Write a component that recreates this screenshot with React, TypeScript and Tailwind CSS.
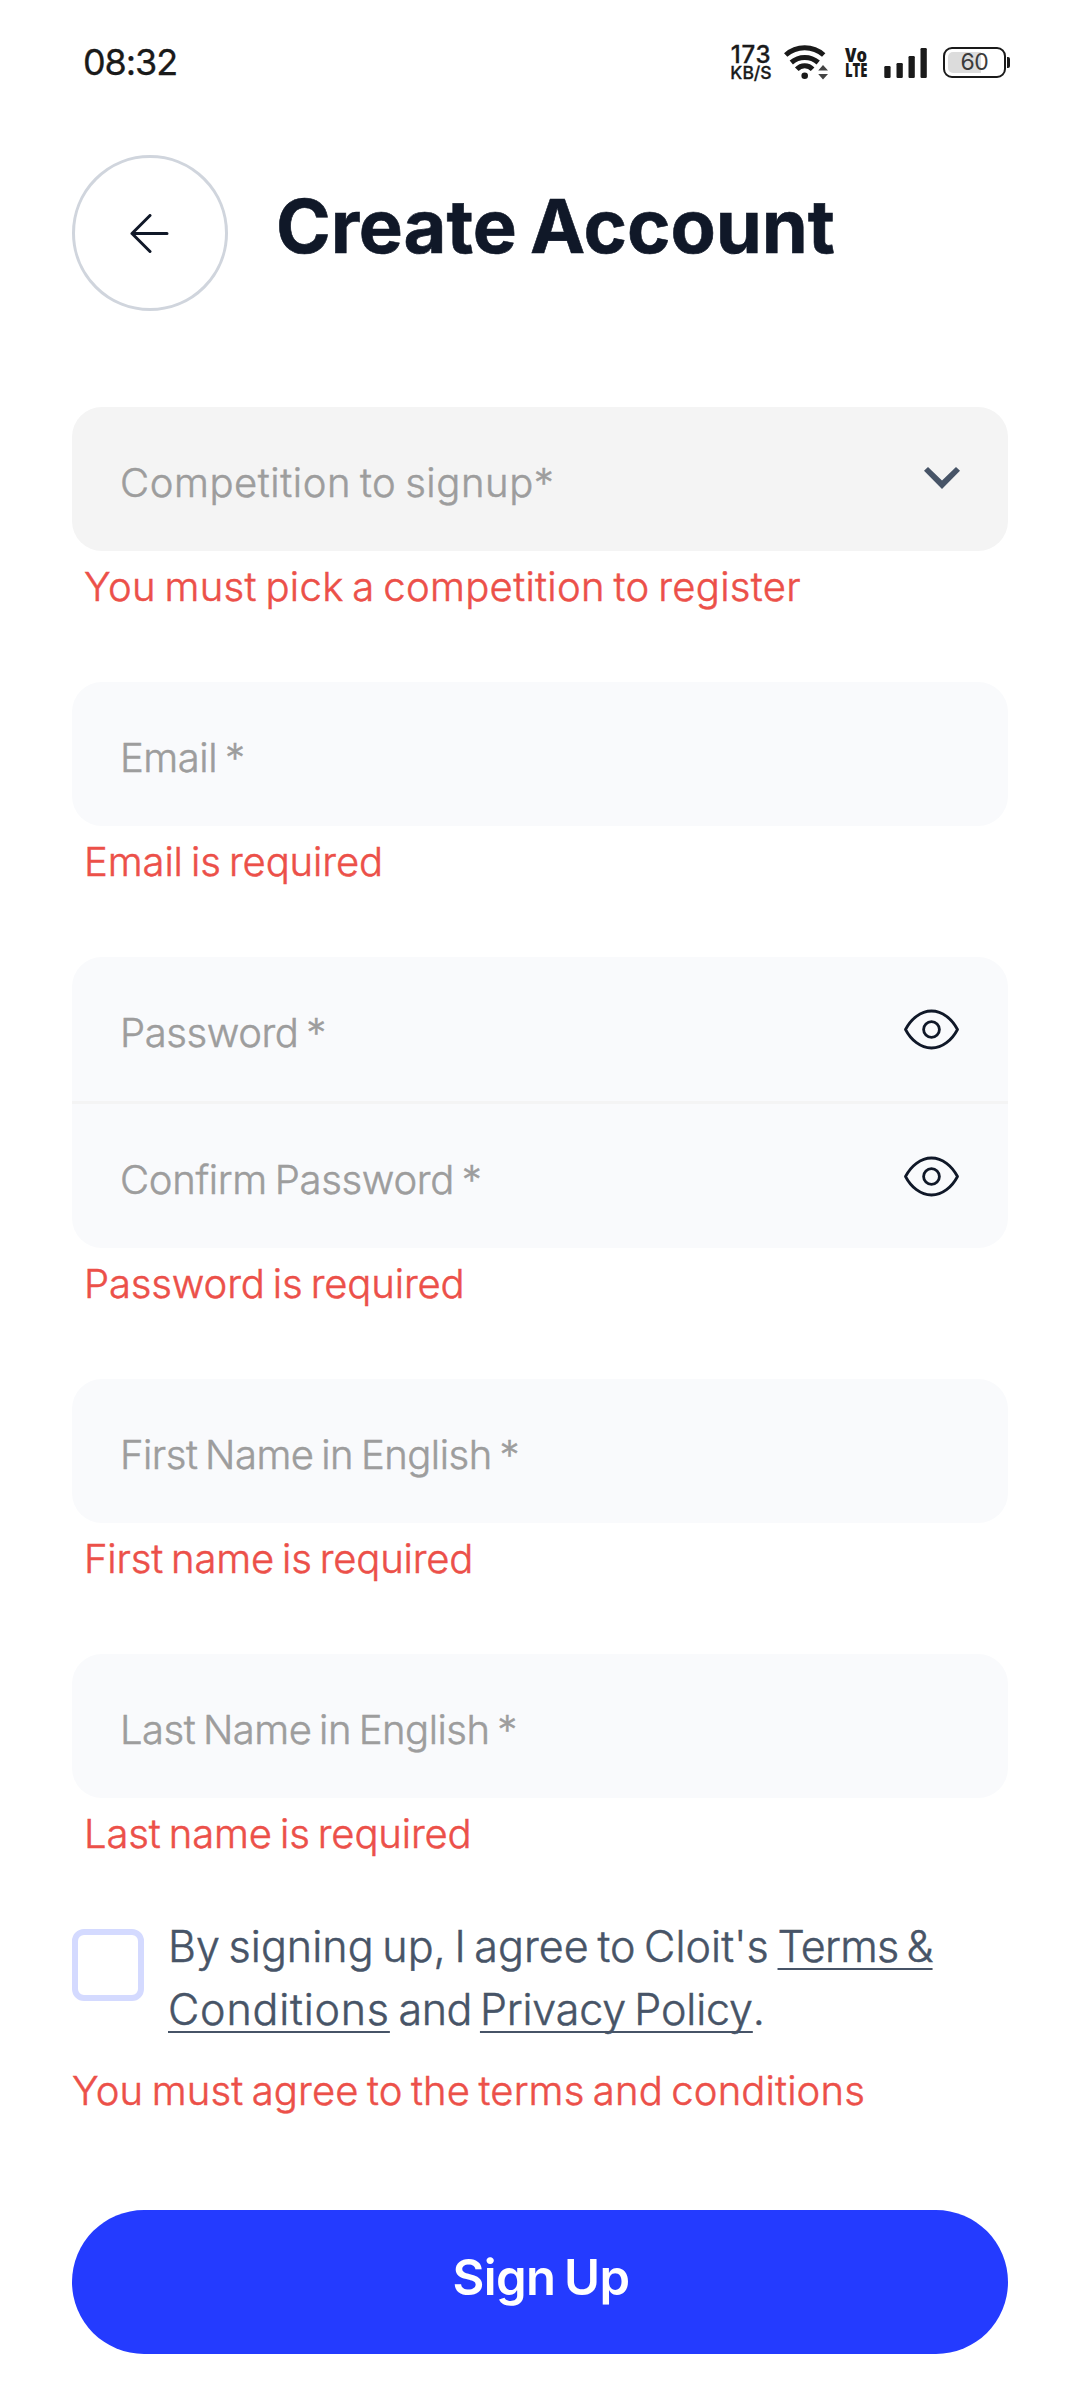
import React from 'react';

function StatusBar() {
  return (
    <div className="flex h-[125px] items-center justify-between pr-[70px] pl-[83px] text-[#1a1a1a]">
      <span className="pb-[2px] text-[36px] leading-none tracking-[-1.1px] [-webkit-text-stroke:0.3px]">08:32</span>
      <div className="flex items-center">
        <div className="flex w-[42px] flex-col items-center pt-px font-medium">
          <span className="text-[24px] leading-[19px] tracking-[0.8px] [-webkit-text-stroke:0.3px]">173</span>
          <span className="text-[17.5px] leading-[17px] tracking-[0px] [-webkit-text-stroke:0.3px]">KB/S</span>
        </div>
        <svg className="ml-[12px] h-[36px] w-[45px]" viewBox="784 43.5 45 36" fill="none">
          <g stroke="#1a1a1a" strokeWidth="5">
            <path d="M785.7 53.5A28.5 28.5 0 0 1 823.7 53.5" />
            <path d="M791.3 61A20.5 20.5 0 0 1 818.2 61" />
            <path d="M796.8 67.8A10.8 10.8 0 0 1 812.6 67.8" />
          </g>
          <circle cx="804.7" cy="74.3" r="3.3" fill="#1a1a1a" />
          <path d="M823 63.5L828 69H818.2ZM818.2 72.6H828L823 78Z" fill="#444" />
        </svg>
        <svg
          className="ml-[16px] h-[36px] w-[24px] overflow-visible font-['Open_Sans'] font-extrabold"
          viewBox="845 44.5 24 36"
          fill="#1a1a1a"
        >
          <text x="845" y="61" fontSize="19" textLength="22" lengthAdjust="spacingAndGlyphs">Vo</text>
          <text x="845" y="76.5" fontSize="18.5" textLength="22.5" lengthAdjust="spacingAndGlyphs">LTE</text>
        </svg>
        <svg className="ml-[15px] h-[30px] w-[43px]" viewBox="884 47 43 30" fill="#1a1a1a">
          <rect x="884.3" y="65" width="6.3" height="12" rx="1.2" />
          <rect x="896.5" y="62" width="6.3" height="15" rx="1.2" />
          <rect x="908.5" y="55" width="6.3" height="22" rx="1.2" />
          <rect x="920.5" y="47" width="6.3" height="30" rx="1.2" />
        </svg>
        <div className="ml-[16px] flex items-center">
          <div className="relative flex h-[31px] w-[63px] items-center justify-center rounded-[9px] border-[2.5px] border-[#1a1a1a]">
            <div className="absolute top-[3px] left-[3px] h-[21px] w-[33px] rounded-l-[5px] bg-[#dcdcdc]" />
            <span className="relative text-[23px] leading-none tracking-[-0.5px] text-[#3a3a3a]">60</span>
          </div>
          <div className="ml-[1px] h-[11px] w-[3px] rounded-r-[2px] bg-[#1a1a1a]" />
        </div>
      </div>
    </div>
  );
}

function EyeIcon() {
  return (
    <svg className="h-[42px] w-[56px]" viewBox="0 0 56 42" fill="none" stroke="#101828" strokeWidth="2.8" strokeLinejoin="round">
      <path d="M1.5 21.5C7 11 16.5 3 27.5 3S48 11 53.5 21.5C48 32 38.5 40 27.5 40S7 32 1.5 21.5Z" />
      <circle cx="27.5" cy="21.5" r="7.9" />
    </svg>
  );
}

function ChevronIcon() {
  return (
    <svg className="h-[24px] w-[36px]" viewBox="0 0 36 24" fill="#475467">
      <path d="M0 3.8L4 0L18 13.5L32 0L36 3.8L18 22Z" />
    </svg>
  );
}

interface FieldProps {
  label: string;
  labelClass: string;
  boxClass: string;
  icon?: React.ReactNode;
}

function Field({ label, labelClass, boxClass, icon }: FieldProps) {
  return (
    <div className={`flex h-[144px] items-center justify-between px-12 ${boxClass}`}>
      <span
        className={`pt-[7px] text-[40px] font-light whitespace-nowrap text-[#9d9d9d] [-webkit-text-stroke:0.5px] [word-spacing:-3px] ${labelClass}`}
      >
        {label}
      </span>
      {icon}
    </div>
  );
}

function FieldError({ text, className }: { text: string; className: string }) {
  return (
    <p
      className={`text-[40px] leading-[60px] font-light whitespace-nowrap text-[#ec5049] [-webkit-text-stroke:0.5px] [word-spacing:-3px] ${className}`}
    >
      {text}
    </p>
  );
}

export default function App() {
  return (
    <div className="h-[2400px] w-[1080px] overflow-hidden bg-white font-['Inter',sans-serif]">
      <StatusBar />
      <header className="mt-[30px] flex items-center gap-12 px-[72px]">
        <button className="flex size-[156px] items-center justify-center rounded-full border-3 border-[#d0d5dd]">
          <svg
            className="mr-px size-[39px]"
            viewBox="0 0 39 39"
            fill="none"
            stroke="#101828"
            strokeWidth="3"
            strokeLinecap="round"
            strokeLinejoin="round"
          >
            <path d="M37 19.5H2M20 1.5L2 19.5L20 37.5" />
          </svg>
        </button>
        <h1 className="pb-[14px] text-[74px] leading-none font-bold tracking-[-0.1px] whitespace-nowrap text-[#101828] [-webkit-text-stroke:0.6px] [word-spacing:-4px]">
          Create Account
        </h1>
      </header>

      <form className="mt-24 px-[72px]">
        <Field
          label="Competition to signup*"
          labelClass="tracking-[0.57px]"
          boxClass="rounded-[30px] bg-[#f4f4f4]"
          icon={<ChevronIcon />}
        />
        <FieldError text="You must pick a competition to register" className="mt-[6px] mb-[65px] pl-3 tracking-[0.34px]" />

        <Field label="Email *" labelClass="tracking-[-0.45px]" boxClass="rounded-[30px] bg-[#f9fafc]" />
        <FieldError text="Email is required" className="mt-[6px] mb-[65px] pl-3 tracking-[-0.1px]" />

        <Field
          label="Password *"
          labelClass="tracking-[-0.42px]"
          boxClass="rounded-t-[30px] bg-[#f9fafc]"
          icon={<EyeIcon />}
        />
        <div className="h-[3px] bg-[#f4f4f4]" />
        <Field
          label="Confirm Password *"
          labelClass="tracking-[-0.33px]"
          boxClass="rounded-b-[30px] bg-[#f9fafc]"
          icon={<EyeIcon />}
        />
        <FieldError text="Password is required" className="mt-[6px] mb-[65px] pl-3 tracking-[-0.13px]" />

        <Field label="First Name in English *" labelClass="tracking-[-0.5px]" boxClass="rounded-[30px] bg-[#f9fafc]" />
        <FieldError text="First name is required" className="mt-[6px] mb-[65px] pl-3 tracking-[-0.17px]" />

        <Field label="Last Name in English *" labelClass="tracking-[-0.5px]" boxClass="rounded-[30px] bg-[#f9fafc]" />
        <FieldError text="Last name is required" className="mt-[6px] mb-[51px] pl-3 tracking-[-0.13px]" />

        <div className="flex gap-6">
          <div className="mt-[14px] size-[72px] shrink-0 rounded-[12px] border-6 border-[#d4daff]" />
          <p className="text-[43px] leading-[63px] font-light tracking-[0.05px] whitespace-nowrap text-[#475467] [-webkit-text-stroke:0.5px] [word-spacing:-3.5px]">
            By signing up, I agree to Cloit's{' '}
            <a className="tracking-[-0.7px] underline decoration-2 underline-offset-[6px] [text-decoration-skip-ink:none]">
              Terms &amp;
            </a>
            <br />
            <a className="tracking-[0.8px] underline decoration-2 underline-offset-[6px] [text-decoration-skip-ink:none]">
              Conditions
            </a>{' '}
            <span className="tracking-[-0.5px]">and </span>
            <a className="tracking-[-0.17px] underline decoration-2 underline-offset-[6px] [text-decoration-skip-ink:none]">
              Privacy Policy
            </a>
            .
          </p>
        </div>
        <FieldError text="You must agree to the terms and conditions" className="mt-[20px] tracking-[0.15px]" />

        <button
          type="button"
          className="mt-[89px] flex h-[144px] w-full items-center justify-center rounded-full bg-[#243bff] pb-[9px] pl-[2px] text-[49px] font-semibold tracking-[-0.6px] text-white [word-spacing:-3px]"
        >
          Sign Up
        </button>
      </form>
    </div>
  );
}
